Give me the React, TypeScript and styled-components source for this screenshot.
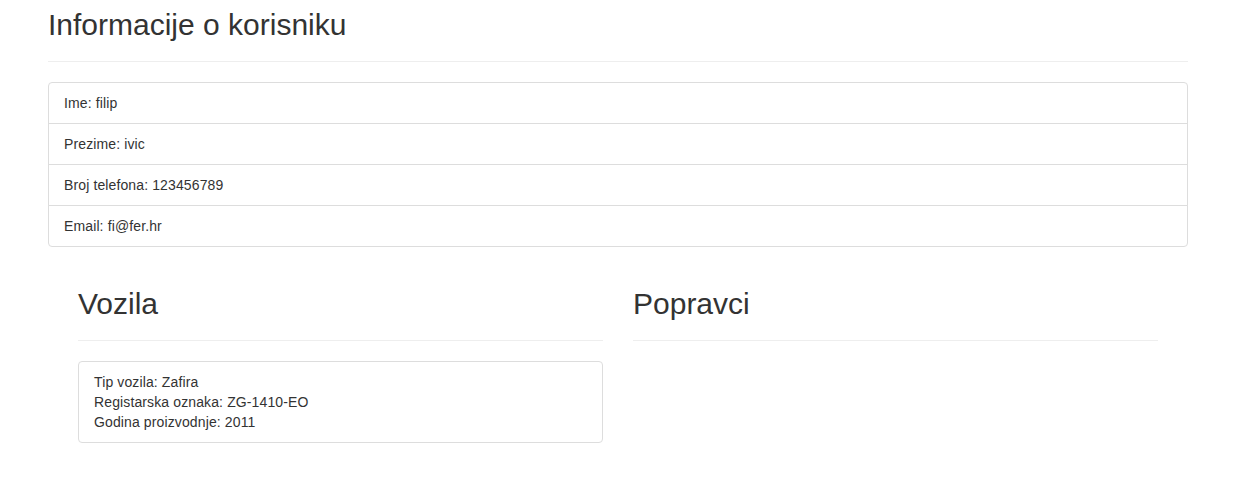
import React from "react";
import styled, { createGlobalStyle } from "styled-components";

const GlobalStyle = createGlobalStyle`
  html, body {
    margin: 0;
    padding: 0;
    background: #fff;
  }
  body {
    font-family: "Liberation Sans", Arial, Helvetica, sans-serif;
    font-size: 14px;
    line-height: 1.42857143;
    color: #333;
  }
  * {
    box-sizing: border-box;
  }
`;

const user = [
  { label: "Ime", value: "filip" },
  { label: "Prezime", value: "ivic" },
  { label: "Broj telefona", value: "123456789" },
  { label: "Email", value: "fi@fer.hr" },
];

const vehicles = [
  { tip: "Zafira", oznaka: "ZG-1410-EO", godina: "2011" },
];

const App = () => {
  return (
    <>
      <GlobalStyle />
      <Container>
        <PageHeader>
          <Heading $top={8}>Informacije o korisniku</Heading>
        </PageHeader>
        <ListGroup>
          {user.map((u) => (
            <ListItem key={u.label}>
              {u.label}: {u.value}
            </ListItem>
          ))}
        </ListGroup>
        <Row>
          <Column>
            <PageHeader>
              <Heading $top={20}>Vozila</Heading>
            </PageHeader>
            {vehicles.map((v) => (
              <VehicleCard key={v.oznaka}>
                Tip vozila: {v.tip}
                <br />
                Registarska oznaka: {v.oznaka}
                <br />
                Godina proizvodnje: {v.godina}
              </VehicleCard>
            ))}
          </Column>
          <Column>
            <PageHeader>
              <Heading $top={20}>Popravci</Heading>
            </PageHeader>
          </Column>
        </Row>
      </Container>
    </>
  );
};

const Container = styled.div`
  width: 1140px;
  margin-left: 48px;
  padding-bottom: 20px;
`;

const PageHeader = styled.div`
  margin: 0;
  padding-bottom: 10px;
  border-bottom: 1px solid #eee;
`;

const Heading = styled.h2<{ $top: number }>`
  margin: ${(p) => p.$top}px 0 10px;
  font-size: 30px;
  font-weight: 500;
  line-height: 1.1;
  color: #333;
`;

const ListGroup = styled.div`
  margin: 20px 0 20px;
  display: flex;
  flex-direction: column;
`;

const ListItem = styled.div`
  padding: 10px 15px;
  margin-bottom: -1px;
  background: #fff;
  border: 1px solid #ddd;
  letter-spacing: 0.12px;
  &:first-child {
    border-top-left-radius: 4px;
    border-top-right-radius: 4px;
  }
  &:last-child {
    margin-bottom: 0;
    border-bottom-left-radius: 4px;
    border-bottom-right-radius: 4px;
  }
`;

const Row = styled.div`
  display: grid;
  grid-template-columns: 1fr 1fr;
  padding: 0 15px;
`;

const Column = styled.div`
  padding: 0 15px;
`;

const VehicleCard = styled.div`
  margin-top: 20px;
  padding: 10px 15px;
  border: 1px solid #ddd;
  border-radius: 4px;
  background: #fff;
  letter-spacing: 0.12px;
`;

export default App;
